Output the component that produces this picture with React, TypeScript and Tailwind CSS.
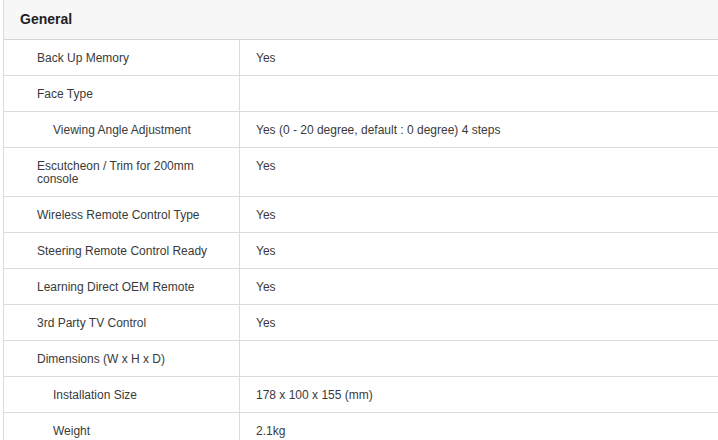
import React from "react";

type Row = { label: string; value?: string; indent?: boolean };

const rows: Row[] = [
  { label: "Back Up Memory", value: "Yes" },
  { label: "Face Type" },
  { label: "Viewing Angle Adjustment", value: "Yes (0 - 20 degree, default : 0 degree) 4 steps", indent: true },
  { label: "Escutcheon / Trim for 200mm console", value: "Yes" },
  { label: "Wireless Remote Control Type", value: "Yes" },
  { label: "Steering Remote Control Ready", value: "Yes" },
  { label: "Learning Direct OEM Remote", value: "Yes" },
  { label: "3rd Party TV Control", value: "Yes" },
  { label: "Dimensions (W x H x D)" },
  { label: "Installation Size", value: "178 x 100 x 155 (mm)", indent: true },
  { label: "Weight", value: "2.1kg", indent: true },
];

export default function App() {
  return (
    <div
      className="w-[718px] h-[440px] overflow-hidden bg-white"
      style={{ fontFamily: '"Liberation Sans", Arial, sans-serif' }}
    >
      <div className="ml-[3px] border-l border-[#dcdcdc]">
        <div className="h-[40px] bg-[#f7f7f7] border-b border-[#d6d6d6] flex items-center pl-[16px]">
          <span className="text-[14px] font-bold text-[#222]">General</span>
        </div>
        {rows.map((r, i) => (
          <div key={i} className="flex border-b border-[#dcdcdc] text-[12px] leading-[13px] text-[#3a3a3a]">
            <div
              className={`w-[236px] shrink-0 border-r border-[#dcdcdc] pt-[12px] pb-[10px] pr-[20px] ${
                r.indent ? "pl-[49px]" : "pl-[33px]"
              }`}
            >
              {r.label}
            </div>
            <div className="flex-1 pt-[12px] pb-[10px] pl-[16px]">{r.value}</div>
          </div>
        ))}
      </div>
    </div>
  );
}
